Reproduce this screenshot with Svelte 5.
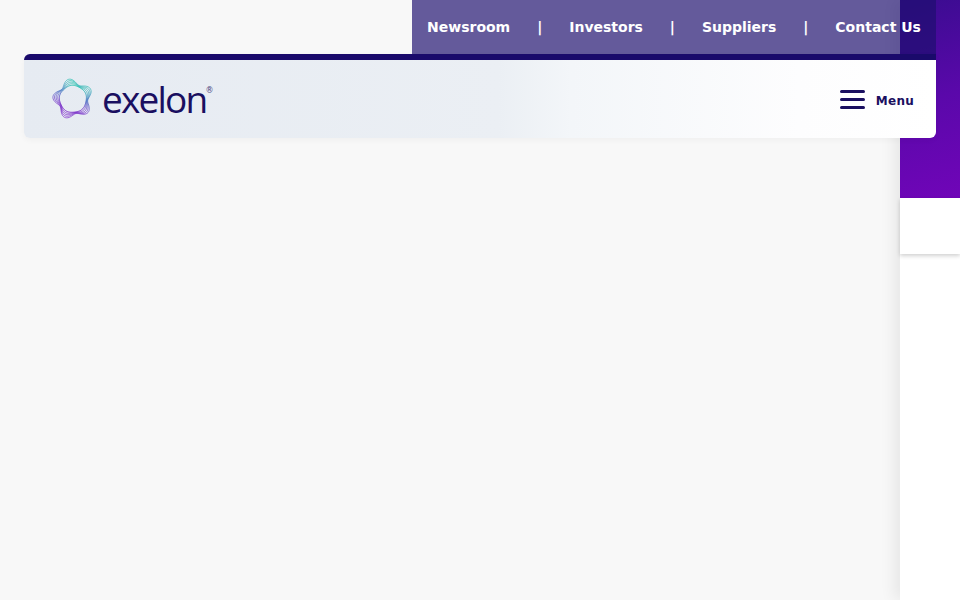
<script lang="ts">
    const links = ['Newsroom', 'Investors', 'Suppliers', 'Contact Us'];

    // wavy rings of the logo: each one is the same five-lobed curve, shifted a little
    function ring(offset: number, amp: number, radius: number): string {
        const pts: string[] = [];
        for (let i = 0; i < 120; i++) {
            const t = (i / 120) * Math.PI * 2;
            const r = radius + amp * Math.sin(5 * t + offset);
            pts.push(`${(32 + r * Math.cos(t)).toFixed(2)} ${(32 + r * Math.sin(t)).toFixed(2)}`);
        }
        return 'M' + pts.join('L') + 'Z';
    }

    const rings = [0, 1, 2, 3, 4].map((n) => ring(3.7 + n * 0.12, 0.3 + n * 0.6, 13.5 + n));
</script>

<div class="page">
    <main class="content"></main>
    <aside class="side">
        <div class="side-top"></div>
        <div class="side-box"></div>
        <div class="side-rest"></div>
    </aside>

    <div class="top-area">
        <nav class="utility">
            {#each links as link, i}
                {#if i > 0}<span class="sep">|</span>{/if}
                <a href="#top">{link}</a>
            {/each}
        </nav>
        <header class="bar">
            <div class="logo">
                <svg width="44" height="44" viewBox="10 10 44 44" aria-hidden="true">
                    <defs>
                        <linearGradient id="ringfill" x1="0.7" y1="0" x2="0.35" y2="1">
                            <stop offset="0" stop-color="#17cfa8" />
                            <stop offset="0.4" stop-color="#3f74c0" />
                            <stop offset="0.75" stop-color="#6a1fc4" />
                            <stop offset="1" stop-color="#7a22c8" />
                        </linearGradient>
                    </defs>
                    {#each rings as d, i}
                        <path {d} fill="none" stroke="url(#ringfill)" stroke-width={i === 0 ? 0.9 : 0.65} />
                    {/each}
                </svg>
                <span class="word">exelon</span>
                <span class="reg">®</span>
            </div>
            <button class="menu">
                <span class="burger"><i></i><i></i><i></i></span>
                <span class="menu-label">Menu</span>
            </button>
        </header>
    </div>
</div>

<style>
    :global(body) {
        background: #f8f8f8;
    }

    .page {
        position: relative;
        display: flex;
        height: 600px;
        overflow: hidden;
        font-family: "DejaVu Sans", sans-serif;
    }

    .content {
        flex: 1;
    }

    .side {
        width: 60px;
        display: flex;
        flex-direction: column;
        background: #fff;
        box-shadow: -6px 0 14px rgba(0, 0, 0, 0.07);
    }

    .side-top {
        height: 198px;
        background: linear-gradient(165deg, #3a0c90 0%, #5a08aa 50%, #7005b8 100%);
    }

    .side-box {
        height: 56px;
        background: #fff;
        box-shadow: 0 2px 4px rgba(0, 0, 0, 0.18);
    }

    .side-rest {
        flex: 1;
        margin-top: 4px;
    }

    .top-area {
        position: absolute;
        top: 0;
        left: 24px;
        right: 24px;
        display: flex;
        flex-direction: column;
    }

    .utility {
        align-self: flex-end;
        height: 54px;
        box-sizing: border-box;
        padding: 0 15px;
        display: flex;
        align-items: center;
        justify-content: space-between;
        width: 524px;
        background: rgba(30, 15, 110, 0.68);
        font-size: 14px;
        font-weight: 700;
        color: #fff;
    }

    .utility a {
        color: inherit;
        text-decoration: none;
    }

    .bar {
        height: 84px;
        box-sizing: border-box;
        border-top: 6px solid #1a0a6b;
        border-radius: 6px 0 6px 6px;
        padding: 0 22px 0 27px;
        display: flex;
        align-items: center;
        justify-content: space-between;
        background: linear-gradient(90deg, #e6ebf2 0%, #ebeff4 52%, #f3f6f9 60%, #fdfdfe 85%, #fff 100%);
        box-shadow: 0 2px 6px rgba(0, 0, 0, 0.04);
    }

    .logo {
        display: flex;
        align-items: center;
        color: #1a0f60;
    }

    .word {
        font-family: "Open Sans", sans-serif;
        font-size: 37px;
        font-weight: 500;
        letter-spacing: -1.8px;
        line-height: 44px;
        margin-left: 7px;
    }

    .reg {
        align-self: flex-start;
        font-size: 8px;
        margin-top: 9px;
        margin-left: -1px;
        color: #4a4580;
    }

    .menu {
        display: flex;
        align-items: center;
        gap: 11px;
        padding: 0;
        border: 0;
        background: none;
        font: 700 12px "DejaVu Sans", sans-serif;
        letter-spacing: 0.25px;
        color: #1a0f60;
    }

    .menu-label {
        padding-top: 3px;
    }

    .burger {
        width: 25px;
        display: flex;
        flex-direction: column;
        gap: 5px;
    }

    .burger i {
        height: 3px;
        border-radius: 2px;
        background: #1a0f60;
    }
</style>
